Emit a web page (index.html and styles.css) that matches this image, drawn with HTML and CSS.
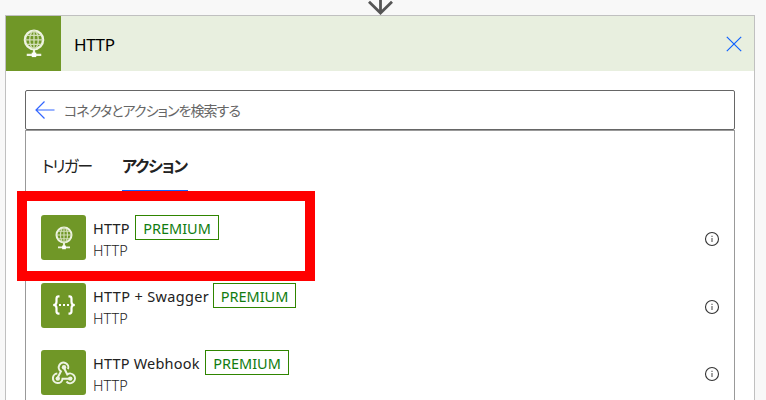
FILE: index.html
```html
<!DOCTYPE html>
<html lang="ja">

<head>
  <meta charset="UTF-8">
  <title>HTTP</title>
  <link rel="stylesheet" href="styles.css">
</head>

<body>
  <svg width="0" height="0" class="symbols">
    <symbol id="globe" viewBox="0 0 24 32">
      <g fill="none" stroke="#eef3e2">
        <circle cx="12" cy="12" r="10" stroke-width="2.700" />
        <g stroke="#d3e0b8" stroke-width="1.500">
          <ellipse cx="12" cy="12" rx="4.700" ry="10" />
          <path d="M12 2v20M2 12h20M4 7h16M4 17h16" />
        </g>
        <path d="M12 22v6M4 28.500h16" stroke-width="2.500" />
        <path d="M9.500 28.500h5" stroke="#fff" stroke-width="5" />
      </g>
    </symbol>
    <symbol id="info" viewBox="0 0 16 16">
      <circle cx="8" cy="8" r="6.500" fill="none" stroke="#333" stroke-width="1.100" />
      <path d="M8 7v4M8 4.700v1.200" stroke="#555" stroke-width="1.100" />
    </symbol>
  </svg>

  <div class="connector">
    <svg width="28" height="15" viewBox="0 0 28 15" fill="none" stroke="#555" stroke-width="2.800">
      <path d="M14.500 0v12.500M3 1.700L14.500 13L26 1.700" />
    </svg>
  </div>

  <div class="card">
    <div class="card-header">
      <div class="card-logo"><svg width="22" height="29"><use href="#globe" /></svg></div>
      <div class="card-title">HTTP</div>
      <svg class="close" width="16" height="16" viewBox="0 0 16 16" stroke="#0f62ff" stroke-width="1.200">
        <path d="M.8 .8l14.400 14.400M15.200 .8L.8 15.200" />
      </svg>
    </div>

    <div class="card-body">
      <div class="search">
        <svg width="20" height="18" viewBox="0 0 20 18" fill="none" stroke="#3366ff" stroke-width="1.200">
          <path d="M19.500 9H1M9.500 .5L1 9l8.500 8.500" />
        </svg>
        <span>コネクタとアクションを検索する</span>
      </div>

      <div class="panel">
        <div class="tabs">
          <div class="tab">トリガー</div>
          <div class="tab active">アクション</div>
        </div>

        <div class="action">
          <div class="action-icon"><svg width="18" height="24"><use href="#globe" /></svg></div>
          <div class="action-text">
            <div class="action-title"><span class="name">HTTP</span><span class="badge">PREMIUM</span></div>
            <div class="action-sub">HTTP</div>
          </div>
          <svg class="info" width="16" height="16"><use href="#info" /></svg>
        </div>

        <div class="action">
          <div class="action-icon">
            <svg width="24" height="20" viewBox="0 0 24 20" fill="none" stroke="#fff" stroke-width="2.200">
              <path d="M7.500 1.400H6.600Q4.500 1.400 4.500 3.700v3.300Q4.500 10 1.200 10Q4.500 10 4.500 13v3.300Q4.500 18.600 6.600 18.600h.9M16.500 1.400h.9Q19.500 1.400 19.500 3.700v3.300Q19.500 10 22.800 10Q19.500 10 19.500 13v3.300Q19.500 18.600 17.400 18.600h-.9" />
              <path d="M7 10h2M11 10h2M15 10h2" stroke-width="2.200" />
            </svg>
          </div>
          <div class="action-text">
            <div class="action-title"><span class="name swagger">HTTP + Swagger</span><span class="badge">PREMIUM</span></div>
            <div class="action-sub">HTTP</div>
          </div>
          <svg class="info" width="16" height="16"><use href="#info" /></svg>
        </div>

        <div class="action">
          <div class="action-icon">
            <svg width="24" height="24" viewBox="0 0 24 24" fill="none" stroke="#edf3e2" stroke-width="2">
              <path d="M16 8.200A4.800 4.800 0 1 0 8.900 10.400L5.800 16.500" />
              <path d="M5.300 12.500A4.800 4.800 0 1 0 10.500 17.800H17.500" />
              <path d="M14.500 20.500A4.800 4.800 0 1 0 15.300 13.500L12 7" />
              <g fill="#edf3e2" stroke="none">
                <circle cx="12" cy="6.300" r="2.200" />
                <circle cx="5.800" cy="17.600" r="2.200" />
                <circle cx="18.300" cy="17.600" r="2.200" />
              </g>
            </svg>
          </div>
          <div class="action-text">
            <div class="action-title"><span class="name webhook">HTTP Webhook</span><span class="badge">PREMIUM</span></div>
            <div class="action-sub">HTTP</div>
          </div>
          <svg class="info" width="16" height="16"><use href="#info" /></svg>
        </div>
      </div>
    </div>
  </div>

  <div class="highlight"></div>
</body>

</html>
```

FILE: styles.css
```css
* {
  box-sizing: border-box;
}

body {
  display: flex;
  flex-direction: column;
  margin: 0;
  height: 400px;
  background-color: #f8f8f8;
  color: #222;
  font-family: "Noto Sans", "Noto Sans CJK JP", sans-serif;
}

svg {
  display: block;
  flex: none;
}

.symbols {
  position: absolute;
}

.connector {
  height: 15px;
  padding-left: 366px;
}

.card {
  display: flex;
  flex-direction: column;
  flex: 1;
  width: 750px;
  margin-left: 5px;
  border: 1px solid #c0c0c0;
  border-bottom: none;
  background-color: #fff;
}

.card-header {
  display: flex;
  align-items: center;
  height: 55px;
  padding-right: 12px;
  background-color: #e8efdf;
}

.card-logo {
  display: flex;
  align-items: center;
  justify-content: center;
  width: 55px;
  height: 55px;
  background-color: #709727;
}

.card-title {
  flex: 1;
  padding: 2px 0 0 13px;
  font-size: 17px;
  line-height: 24px;
  letter-spacing: -0.4px;
  color: #000;
}

.card-body {
  display: flex;
  flex-direction: column;
  flex: 1;
  padding: 19px 19px 0 19px;
}

.search {
  display: flex;
  align-items: center;
  gap: 9px;
  height: 40px;
  padding-left: 9px;
  border: 1px solid #666;
  border-radius: 2px;
  font-family: "Noto Sans CJK JP", sans-serif;
  font-size: 14px;
  font-feature-settings: "palt";
  letter-spacing: -0.95px;
  color: #666;
}

.panel {
  flex: 1;
  padding: 0 14px 0 15px;
  border: 1px solid #999;
  border-bottom: none;
}

.tabs {
  display: flex;
  gap: 30px;
  height: 61px;
  margin-bottom: 23px;
  font-family: "Noto Sans CJK JP", sans-serif;
  font-size: 16px;
  font-feature-settings: "palt";
  letter-spacing: -1.3px;
}

.tab {
  width: 51px;
  padding: 22px 0 0 1px;
  line-height: 24px;
  letter-spacing: -1.8px;
  white-space: nowrap;
}

.tab.active {
  width: 66px;
  padding-left: 0;
  border-bottom: 2px solid #0f62ff;
  font-weight: bold;
  letter-spacing: -1.2px;
}

.action {
  display: flex;
  height: 45px;
  margin-bottom: 22.5px;
}

.action:last-child {
  margin-bottom: 0;
}

.action-icon {
  display: flex;
  align-items: center;
  justify-content: center;
  width: 45px;
  height: 45px;
  border-radius: 3px;
  background-color: #709727;
}

.action-text {
  flex: 1;
  padding-left: 7px;
}

.action-title {
  display: flex;
  gap: 6px;
  height: 26px;
  font-size: 14.5px;
  line-height: 26px;
}

.name {
  width: 36px;
  letter-spacing: 0.2px;
  white-space: nowrap;
}

.name.swagger {
  width: 114px;
  letter-spacing: 0.35px;
}

.name.webhook {
  width: 106px;
}

.badge {
  width: 84px;
  height: 25px;
  border: 1px solid #2f8500;
  line-height: 25px;
  text-align: center;
  color: #107c10;
}

.swagger + .badge {
  width: 83px;
}

.action-sub {
  font-size: 14.5px;
  font-weight: 300;
  line-height: 19px;
  color: #222;
}

.info {
  margin-top: 16px;
}

/* red frame over the first action */
.highlight {
  position: absolute;
  left: 17px;
  top: 191px;
  width: 298px;
  height: 90px;
  border: 10px solid #f00;
}
```
